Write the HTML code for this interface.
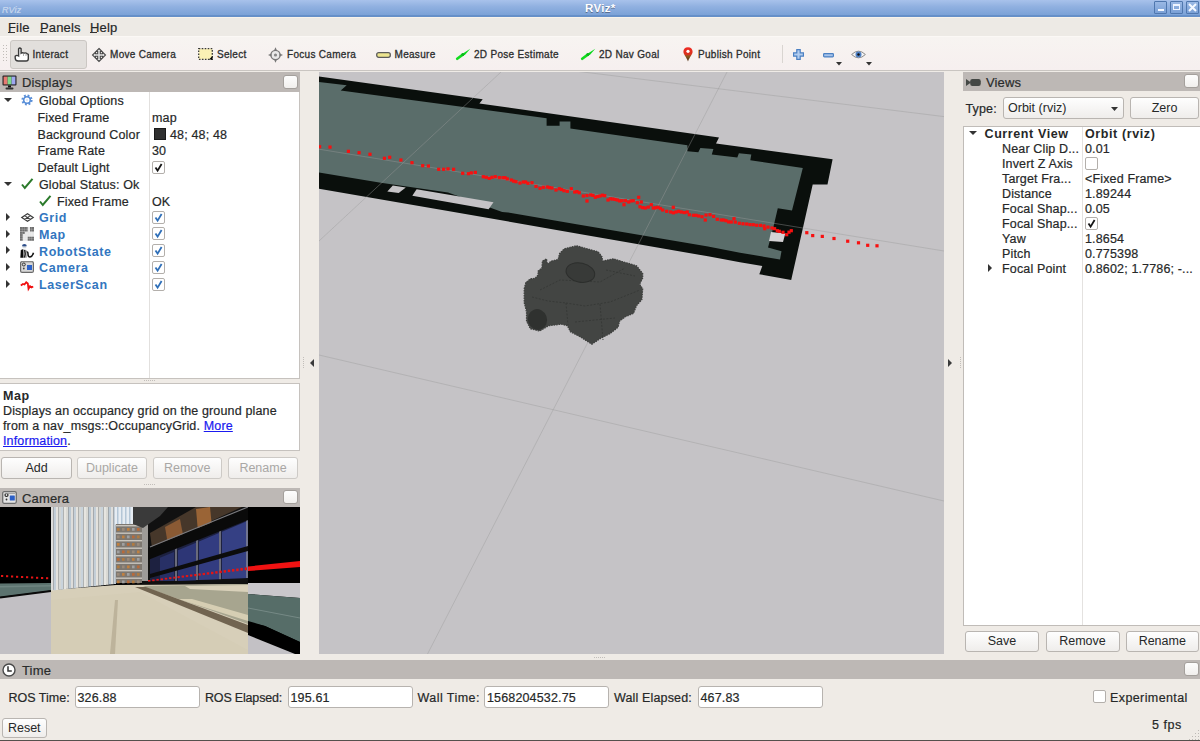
<!DOCTYPE html><html><head><meta charset="utf-8"><style>
*{box-sizing:border-box;margin:0;padding:0}
html,body{width:1200px;height:741px;overflow:hidden;background:#efebe6;font-family:"Liberation Sans",sans-serif;font-size:12.5px;color:#262828;-webkit-font-smoothing:antialiased}
.a{position:absolute}
.t{position:absolute;white-space:nowrap;line-height:16px;letter-spacing:0.15px;-webkit-text-stroke:0.2px currentColor}
svg{position:absolute;overflow:visible}
.hdr{position:absolute;background:#bdb8b5}
.hdr .t{top:3px;font-size:13px;color:#2a2c2c}
.chk{position:absolute;width:15px;height:14px;background:linear-gradient(#fdfdfd,#f1efed);border:1px solid #a4a09c;border-radius:3px}
.white{position:absolute;background:#fff;border:1px solid #b9b5b1}
.btn{position:absolute;border:1px solid #b9b5b1;border-radius:3px;background:linear-gradient(#fefefe,#efedeb);text-align:center;color:#262828}
.dis{color:#a9a7a5;border-color:#cdcac6}
.blue{color:#3276c0;font-weight:bold;letter-spacing:0.6px;-webkit-text-stroke:0}
.b{font-weight:bold;letter-spacing:0.6px;-webkit-text-stroke:0}
.tb{font-size:10px;color:#2c2e2e;letter-spacing:0.3px;-webkit-text-stroke:0.3px currentColor}
.vchk{position:absolute;width:13px;height:13px;border:1px solid #b3afab;border-radius:2px;background:#fff}
.field{position:absolute;height:22px;background:#fff;border:1px solid #b7b3af;border-radius:3px}
</style></head><body>
<div class="a" style="left:0;top:0;width:1200px;height:17px;background:linear-gradient(#a8c2eb,#90b0e0 45%,#7ba2d7);border-bottom:2px solid #6690c8"></div>
<div class="t b" style="left:585px;top:0px;color:#fff;font-size:11.5px;letter-spacing:0.3px;text-shadow:0 1px 0 #5a6f8f">RViz*</div>
<div class="t" style="left:2px;top:2px;color:#c8d8ee;font-size:9px;font-style:italic">RViz</div>
<div class="a" style="left:1154px;top:1px;width:13px;height:13px;border:1px solid #4f77ae;background:linear-gradient(#9ab8e4,#7aa0d6);border-radius:1px"></div>
<div class="a" style="left:1170px;top:1px;width:13px;height:13px;border:1px solid #4f77ae;background:linear-gradient(#9ab8e4,#7aa0d6);border-radius:1px"></div>
<div class="a" style="left:1186px;top:1px;width:13px;height:13px;border:1px solid #4f77ae;background:linear-gradient(#9ab8e4,#7aa0d6);border-radius:1px"></div>
<div class="a" style="left:1158px;top:9px;width:6px;height:2px;background:#f4f8ff"></div>
<div class="a" style="left:1173px;top:4px;width:7px;height:6px;border:1.5px solid #eef4ff;border-top-width:2.5px"></div>
<svg style="left:1188px;top:3px" width="9" height="9"><path d="M1 1L8 8M8 1L1 8" stroke="#f4f8ff" stroke-width="2"/></svg>
<div class="a" style="left:0;top:17px;width:1200px;height:19px;background:#edeae5;border-top:1px solid #f8f3ea"></div>
<div class="t" style="left:8px;top:20px;font-size:13px">File</div>
<div class="a" style="left:8px;top:32px;width:7px;height:1px;background:#333"></div>
<div class="t" style="left:40px;top:20px;font-size:13px">Panels</div>
<div class="a" style="left:40px;top:32px;width:7px;height:1px;background:#333"></div>
<div class="t" style="left:90px;top:20px;font-size:13px">Help</div>
<div class="a" style="left:90px;top:32px;width:7px;height:1px;background:#333"></div>
<div class="a" style="left:0;top:36px;width:1200px;height:35px;background:linear-gradient(#f7f4f1,#f6efef);border-top:1px solid #fbf8f5;border-bottom:1px solid #c9c5c1"></div>
<svg style="left:3px;top:45px" width="6" height="18"><rect x="0" y="0" width="1" height="1" fill="#c0bcb8"/><rect x="0" y="3" width="1" height="1" fill="#c0bcb8"/><rect x="0" y="6" width="1" height="1" fill="#c0bcb8"/><rect x="0" y="9" width="1" height="1" fill="#c0bcb8"/><rect x="0" y="12" width="1" height="1" fill="#c0bcb8"/><rect x="0" y="15" width="1" height="1" fill="#c0bcb8"/><rect x="3" y="0" width="1" height="1" fill="#c0bcb8"/><rect x="3" y="3" width="1" height="1" fill="#c0bcb8"/><rect x="3" y="6" width="1" height="1" fill="#c0bcb8"/><rect x="3" y="9" width="1" height="1" fill="#c0bcb8"/><rect x="3" y="12" width="1" height="1" fill="#c0bcb8"/><rect x="3" y="15" width="1" height="1" fill="#c0bcb8"/></svg>
<div class="a" style="left:10px;top:40px;width:77px;height:29px;border:1px solid #cbc7c3;border-radius:3px;background:#e2dfdc"></div><div class="t tb" style="left:32.5px;top:46.5px;">Interact</div>
<div class="t tb" style="left:110px;top:46.5px;">Move Camera</div>
<div class="t tb" style="left:217px;top:46.5px;">Select</div>
<div class="t tb" style="left:287px;top:46.5px;">Focus Camera</div>
<div class="t tb" style="left:394.5px;top:46.5px;">Measure</div>
<div class="t tb" style="left:474px;top:46.5px;">2D Pose Estimate</div>
<div class="t tb" style="left:599px;top:46.5px;">2D Nav Goal</div>
<div class="t tb" style="left:698px;top:46.5px;">Publish Point</div>
<svg style="left:14px;top:47px" width="16" height="15" viewBox="0 0 16 15"><path d="M4.6 9 L4.6 1.8 Q5.8 0.2 7.1 1.8 L7.1 6.2 Q8.6 5.2 10 6.2 Q11.6 5.4 13 6.6 L14.3 7.4 L14.3 11.8 Q14.3 14 12.1 14 L4.2 14 Q1.2 14 1.2 11 L1.2 9.3 Q2.6 7.6 4.6 9 Z" fill="#fff" stroke="#3b3b3b" stroke-width="1.4"/><path d="M9.5 6.5V9M12 6.8V9" stroke="#999" stroke-width="0.8"/></svg>
<svg style="left:92px;top:48px" width="14" height="14" viewBox="0 0 14 14"><polygon points="7,0.5 10,3.5 8.3,3.5 8.3,5.7 10.5,5.7 10.5,4 13.5,7 10.5,10 10.5,8.3 8.3,8.3 8.3,10.5 10,10.5 7,13.5 4,10.5 5.7,10.5 5.7,8.3 3.5,8.3 3.5,10 0.5,7 3.5,4 3.5,5.7 5.7,5.7 5.7,3.5 4,3.5" fill="#e6e6e6" stroke="#4a4a4a" stroke-width="1.1"/></svg>
<svg style="left:198px;top:48px" width="15" height="12" viewBox="0 0 15 12"><rect x="0.7" y="0.7" width="13.6" height="10.6" fill="#fbf1b5" stroke="#3a3a3a" stroke-width="1.3" stroke-dasharray="1.6 1.4"/><polygon points="14.5,8 14.5,11.5 11,11.5" fill="#000"/></svg>
<svg style="left:268px;top:47px" width="15" height="16" viewBox="0 0 15 16"><circle cx="7.5" cy="8" r="4.6" fill="#e9e9e9" stroke="#7a7a7a" stroke-width="1.4"/><polygon points="7.5,0.3 9,3.6 6,3.6" fill="#777"/><polygon points="7.5,15.7 9,12.4 6,12.4" fill="#777"/><polygon points="0,8 3.3,6.5 3.3,9.5" fill="#777"/><polygon points="15,8 11.7,6.5 11.7,9.5" fill="#777"/><circle cx="7.5" cy="8" r="1.6" fill="#888"/></svg>
<svg style="left:376px;top:51.5px" width="15" height="6" viewBox="0 0 15 6"><rect x="0.7" y="0.7" width="13.6" height="4.6" rx="2" fill="#ece48f" stroke="#5a5a5a" stroke-width="1.3"/></svg>
<svg style="left:456px;top:48px" width="15" height="12" viewBox="0 0 15 12"><path d="M1.2 10.8 L6.8 6.6" stroke="#12dc1f" stroke-width="2.6" stroke-linecap="round"/><path d="M5 7.6 L7.6 5 L14.3 0.7 L8.8 7 Z" fill="#08d81a"/><circle cx="6.8" cy="6.6" r="1.5" fill="#0bb71a"/></svg>
<svg style="left:580.5px;top:48px" width="15" height="12" viewBox="0 0 15 12"><path d="M1.2 10.8 L6.8 6.6" stroke="#12dc1f" stroke-width="2.6" stroke-linecap="round"/><path d="M5 7.6 L7.6 5 L14.3 0.7 L8.8 7 Z" fill="#08d81a"/><circle cx="6.8" cy="6.6" r="1.5" fill="#0bb71a"/></svg>
<svg style="left:682.5px;top:47px" width="10" height="15" viewBox="0 0 10 15"><defs><linearGradient id="pg" x1="0" y1="0" x2="0" y2="1"><stop offset="0" stop-color="#f02a22"/><stop offset="0.5" stop-color="#d8321e"/><stop offset="0.62" stop-color="#8a5a20"/><stop offset="1" stop-color="#4a2a10"/></linearGradient></defs><path d="M5 0.3 C8 0.3 9.6 2.4 9.6 4.8 C9.6 7.5 6.6 10 5 14.5 C3.4 10 0.4 7.5 0.4 4.8 C0.4 2.4 2 0.3 5 0.3Z" fill="url(#pg)"/><circle cx="5" cy="4.3" r="1.6" fill="#fff"/></svg>
<div class="a" style="left:782px;top:45px;width:1px;height:18px;background:#d9d5d1"></div>
<svg style="left:793px;top:49px" width="11" height="11" viewBox="0 0 11 11"><polygon points="3.8,0.6 7.2,0.6 7.2,3.8 10.4,3.8 10.4,7.2 7.2,7.2 7.2,10.4 3.8,10.4 3.8,7.2 0.6,7.2 0.6,3.8 3.8,3.8" fill="#b3cdef" stroke="#4b80c2" stroke-width="1.2"/></svg>
<svg style="left:823px;top:52.5px" width="11" height="4.5" viewBox="0 0 11 4.5"><rect x="0.6" y="0.6" width="9.8" height="3.3" rx="0.8" fill="#a6c3ea" stroke="#4b80c2" stroke-width="1.2"/></svg>
<svg style="left:836px;top:62px" width="6" height="3.5" viewBox="0 0 6 3.5"><polygon points="0,0 6,0 3,3.5" fill="#333"/></svg>
<svg style="left:866px;top:62px" width="6" height="3.5" viewBox="0 0 6 3.5"><polygon points="0,0 6,0 3,3.5" fill="#333"/></svg>
<svg style="left:851px;top:50px" width="15" height="9" viewBox="0 0 15 9"><path d="M0.6 4.5 Q7.5 -2.2 14.4 4.5 Q7.5 11.2 0.6 4.5Z" fill="#f4f4f4" stroke="#8a8a8a" stroke-width="1"/><circle cx="7.5" cy="4.5" r="3" fill="#4d7fc4"/><circle cx="7.5" cy="4.5" r="1.2" fill="#111"/></svg><div class="hdr" style="left:0;top:72px;width:300px;height:20px"><div class="t" style="left:22px">Displays</div></div>
<svg style="left:2px;top:75px" width="15" height="15" viewBox="0 0 15 15"><rect x="0.5" y="0.5" width="14" height="10" rx="1" fill="#222"/><rect x="1.6" y="1.6" width="4" height="7.8" fill="#e57a72"/><rect x="5.6" y="1.6" width="4" height="7.8" fill="#7fd98a"/><rect x="9.6" y="1.6" width="3.8" height="7.8" fill="#9fa8f0"/><rect x="6" y="10.5" width="3" height="2" fill="#111"/><rect x="3.5" y="12.5" width="8" height="2" rx="1" fill="#333"/></svg>
<div class="chk" style="left:283px;top:75px"></div>
<div class="white" style="left:0;top:92px;width:300px;height:287px;border-left:0;border-top:0;border-color:#c6c2be"></div>
<div class="a" style="left:149px;top:92px;width:1px;height:286px;background:#e2e0de"></div>
<div class="t" style="left:39px;top:93.3px;">Global Options</div>
<div class="a" style="left:4px;top:98.3px;width:0;height:0;border-left:4px solid transparent;border-right:4px solid transparent;border-top:4.5px solid #333"></div>
<svg style="left:21px;top:94.0px" width="12" height="12" viewBox="0 0 12 12"><circle cx="6" cy="6" r="4.3" fill="none" stroke="#5a8fd8" stroke-width="2.6" stroke-dasharray="1.7 1.68"/><circle cx="6" cy="6" r="3.3" fill="none" stroke="#5a8fd8" stroke-width="1.6"/><circle cx="6" cy="6" r="1.2" fill="#dfe9f7"/></svg>
<div class="t" style="left:37.5px;top:110.0px;">Fixed Frame</div>
<div class="t" style="left:152px;top:110.0px;">map</div>
<div class="t" style="left:37.5px;top:126.8px;">Background Color</div>
<div class="a" style="left:154px;top:127.8px;width:12px;height:12px;background:#303030;border:1px solid #1a1a1a"></div>
<div class="t" style="left:170px;top:126.8px;">48; 48; 48</div>
<div class="t" style="left:37.5px;top:143.4px;">Frame Rate</div>
<div class="t" style="left:152px;top:143.4px;">30</div>
<div class="t" style="left:37.5px;top:160.1px;">Default Light</div>
<div class="vchk" style="left:152px;top:160.6px"><svg style="left:0;top:0" width="11" height="11" viewBox="0 0 11 11"><path d="M2.5 5.5 L4.6 8.6 L8.6 2" fill="none" stroke="#151515" stroke-width="1.8"/></svg></div>
<div class="t" style="left:39px;top:176.8px;">Global Status: Ok</div>
<div class="a" style="left:4px;top:181.8px;width:0;height:0;border-left:4px solid transparent;border-right:4px solid transparent;border-top:4.5px solid #333"></div>
<svg style="left:21px;top:178.0px" width="12" height="11" viewBox="0 0 12 11"><path d="M1 6.5 L3.8 10 L11.5 0.8" fill="none" stroke="#2b7a2b" stroke-width="2"/></svg>
<div class="t" style="left:57px;top:193.5px;">Fixed Frame</div>
<div class="t" style="left:152px;top:193.5px;">OK</div>
<svg style="left:39px;top:194.7px" width="12" height="11" viewBox="0 0 12 11"><path d="M1 6.5 L3.8 10 L11.5 0.8" fill="none" stroke="#2b7a2b" stroke-width="2"/></svg>
<div class="t blue" style="left:39px;top:210.2px;">Grid</div>
<div class="vchk" style="left:152px;top:210.8px"><svg style="left:0;top:0" width="11" height="11" viewBox="0 0 11 11"><path d="M2.5 5.5 L4.6 8.6 L8.6 2" fill="none" stroke="#2f6fb8" stroke-width="1.8"/></svg></div>
<div class="a" style="left:6px;top:213.1px;width:0;height:0;border-top:4.2px solid transparent;border-bottom:4.2px solid transparent;border-left:4.5px solid #333"></div>
<svg style="left:21px;top:212.9px" width="13" height="9" viewBox="0 0 13 9"><path d="M0.7 4.5 L6.5 0.7 L12.3 4.5 L6.5 8.3Z M3.6 2.6 L9.4 6.4 M9.4 2.6 L3.6 6.4" fill="none" stroke="#3a3a3a" stroke-width="1.1"/></svg>
<div class="t blue" style="left:39px;top:226.9px;">Map</div>
<div class="vchk" style="left:152px;top:227.4px"><svg style="left:0;top:0" width="11" height="11" viewBox="0 0 11 11"><path d="M2.5 5.5 L4.6 8.6 L8.6 2" fill="none" stroke="#2f6fb8" stroke-width="1.8"/></svg></div>
<div class="a" style="left:6px;top:229.8px;width:0;height:0;border-top:4.2px solid transparent;border-bottom:4.2px solid transparent;border-left:4.5px solid #333"></div>
<svg style="left:19.8px;top:227.0px" width="14" height="14" viewBox="0 0 14 14"><rect x="0" y="0" width="14" height="13.7" fill="#e6e6e6"/><rect x="0" y="0" width="7.7" height="4.6" fill="#6e6e6e"/><rect x="0" y="4.6" width="4.9" height="2.4" fill="#6e6e6e"/><rect x="0" y="7" width="2.8" height="6.7" fill="#6e6e6e"/><rect x="10" y="0" width="4" height="4.6" fill="#6e6e6e"/><rect x="7.7" y="9.7" width="6.3" height="4" fill="#6e6e6e"/><path d="M2.3 0V13.7M4.6 0V13.7M7 0V13.7M9.3 0V13.7M11.6 0V13.7M0 2.3H14M0 4.6H14M0 6.9H14M0 9.2H14M0 11.5H14" stroke="#fff" stroke-opacity="0.35" stroke-width="0.5"/></svg>
<div class="t blue" style="left:39px;top:243.6px;">RobotState</div>
<div class="vchk" style="left:152px;top:244.1px"><svg style="left:0;top:0" width="11" height="11" viewBox="0 0 11 11"><path d="M2.5 5.5 L4.6 8.6 L8.6 2" fill="none" stroke="#2f6fb8" stroke-width="1.8"/></svg></div>
<div class="a" style="left:6px;top:246.4px;width:0;height:0;border-top:4.2px solid transparent;border-bottom:4.2px solid transparent;border-left:4.5px solid #333"></div>
<svg style="left:20px;top:244.0px" width="14" height="14" viewBox="0 0 14 14"><ellipse cx="4.4" cy="1.6" rx="2.3" ry="1.5" fill="#2e4f8a"/><rect x="2.6" y="2.4" width="3.6" height="1.8" fill="#d8dde0"/><path d="M0.3 13.8 L0.8 6.5 Q1.5 5.3 3.3 5.3 L3.6 13.8Z" fill="#0c0c0c"/><path d="M3.6 5.5 L6.5 6 L6.8 13.8 L3.6 13.8Z" fill="#9a9a9a"/><path d="M4.6 6 L5.3 10 L4.4 13.5" fill="none" stroke="#111" stroke-width="1"/><path d="M6.6 8 Q8 7.5 8 10 Q8 13 10 13 Q12.5 12.5 13.5 8.8" fill="none" stroke="#151515" stroke-width="1.5"/></svg>
<div class="t blue" style="left:39px;top:260.4px;">Camera</div>
<div class="vchk" style="left:152px;top:260.9px"><svg style="left:0;top:0" width="11" height="11" viewBox="0 0 11 11"><path d="M2.5 5.5 L4.6 8.6 L8.6 2" fill="none" stroke="#2f6fb8" stroke-width="1.8"/></svg></div>
<div class="a" style="left:6px;top:263.2px;width:0;height:0;border-top:4.2px solid transparent;border-bottom:4.2px solid transparent;border-left:4.5px solid #333"></div>
<svg style="left:20px;top:260.4px" width="14" height="13" viewBox="0 0 14 13"><rect x="0.6" y="1.6" width="12.8" height="10.8" rx="1.5" fill="#d8d8d8" stroke="#6a6a6a" stroke-width="1.2"/><circle cx="3.8" cy="4.5" r="1.5" fill="none" stroke="#333" stroke-width="1"/><circle cx="3.8" cy="8.5" r="0.9" fill="#444"/><rect x="7" y="5" width="5" height="5" fill="#2d62c8"/><rect x="2" y="1" width="10" height="1" fill="#888"/></svg>
<div class="t blue" style="left:39px;top:277.0px;">LaserScan</div>
<div class="vchk" style="left:152px;top:277.5px"><svg style="left:0;top:0" width="11" height="11" viewBox="0 0 11 11"><path d="M2.5 5.5 L4.6 8.6 L8.6 2" fill="none" stroke="#2f6fb8" stroke-width="1.8"/></svg></div>
<div class="a" style="left:6px;top:279.8px;width:0;height:0;border-top:4.2px solid transparent;border-bottom:4.2px solid transparent;border-left:4.5px solid #333"></div>
<svg style="left:20px;top:280.7px" width="14" height="9" viewBox="0 0 14 9"><path d="M0.8 4.5 L3 3 L4.5 3.5 L6.2 1.2 L7.8 2.5 L8.5 7.8 L10 5.2 L11.5 6.5 L13.2 5.5" fill="none" stroke="#f01010" stroke-width="1.8"/></svg>
<div class="a" style="left:144px;top:380px;width:1px;height:1px;background:#c2beba"></div><div class="a" style="left:146px;top:380px;width:1px;height:1px;background:#c2beba"></div><div class="a" style="left:148px;top:380px;width:1px;height:1px;background:#c2beba"></div><div class="a" style="left:150px;top:380px;width:1px;height:1px;background:#c2beba"></div><div class="a" style="left:152px;top:380px;width:1px;height:1px;background:#c2beba"></div><div class="a" style="left:154px;top:380px;width:1px;height:1px;background:#c2beba"></div>
<div class="a" style="left:144px;top:484px;width:1px;height:1px;background:#c2beba"></div><div class="a" style="left:146px;top:484px;width:1px;height:1px;background:#c2beba"></div><div class="a" style="left:148px;top:484px;width:1px;height:1px;background:#c2beba"></div><div class="a" style="left:150px;top:484px;width:1px;height:1px;background:#c2beba"></div><div class="a" style="left:152px;top:484px;width:1px;height:1px;background:#c2beba"></div><div class="a" style="left:154px;top:484px;width:1px;height:1px;background:#c2beba"></div>
<div class="white" style="left:0;top:383px;width:300px;height:68px;border-left:0;border-color:#c6c2be"></div>
<div class="t b" style="left:3px;top:387.7px;">Map</div>
<div class="t" style="left:3px;top:402.7px;">Displays an occupancy grid on the ground plane</div>
<div class="t" style="left:3px;top:417.7px;">from a nav_msgs::OccupancyGrid. <span style="color:#1a1af0;text-decoration:underline">More</span></div>
<div class="t" style="left:3px;top:432.7px;"><span style="color:#1a1af0;text-decoration:underline">Information</span>.</div>
<div class="btn" style="left:1px;top:457px;width:71px;height:22px;line-height:20px">Add</div>
<div class="btn dis" style="left:77px;top:457px;width:70px;height:22px;line-height:20px">Duplicate</div>
<div class="btn dis" style="left:152.5px;top:457px;width:69.5px;height:22px;line-height:20px">Remove</div>
<div class="btn dis" style="left:228px;top:457px;width:70px;height:22px;line-height:20px">Rename</div>
<div class="hdr" style="left:0;top:488px;width:300px;height:19px"><div class="t" style="left:22px">Camera</div></div>
<svg style="left:2px;top:491px" width="15" height="13" viewBox="0 0 15 13"><rect x="0.7" y="0.7" width="13.6" height="11.6" rx="1.5" fill="#e4e4e4" stroke="#6e6e6e" stroke-width="1.3"/><circle cx="4.5" cy="4" r="1.5" fill="none" stroke="#222" stroke-width="1.2"/><circle cx="4.5" cy="8.5" r="0.9" fill="#333"/><rect x="7.8" y="4.5" width="5" height="5" rx="0.5" fill="#2c5fc6"/><rect x="3" y="1.8" width="10" height="1" fill="#999"/></svg>
<div class="chk" style="left:283px;top:490px"></div><div class="a" style="left:310px;top:359px;width:0;height:0;border-top:4px solid transparent;border-bottom:4px solid transparent;border-right:4px solid #3a3a3a"></div>
<div class="a" style="left:948px;top:359px;width:0;height:0;border-top:4px solid transparent;border-bottom:4px solid transparent;border-left:4px solid #3a3a3a"></div>
<div class="a" style="left:303px;top:357px;width:1px;height:1px;background:#c2beba"></div><div class="a" style="left:303px;top:359px;width:1px;height:1px;background:#c2beba"></div><div class="a" style="left:303px;top:361px;width:1px;height:1px;background:#c2beba"></div><div class="a" style="left:303px;top:363px;width:1px;height:1px;background:#c2beba"></div><div class="a" style="left:303px;top:365px;width:1px;height:1px;background:#c2beba"></div><div class="a" style="left:303px;top:367px;width:1px;height:1px;background:#c2beba"></div>
<div class="a" style="left:960px;top:357px;width:1px;height:1px;background:#c2beba"></div><div class="a" style="left:960px;top:359px;width:1px;height:1px;background:#c2beba"></div><div class="a" style="left:960px;top:361px;width:1px;height:1px;background:#c2beba"></div><div class="a" style="left:960px;top:363px;width:1px;height:1px;background:#c2beba"></div><div class="a" style="left:960px;top:365px;width:1px;height:1px;background:#c2beba"></div><div class="a" style="left:960px;top:367px;width:1px;height:1px;background:#c2beba"></div>
<div class="hdr" style="left:963px;top:72px;width:237px;height:19px"><div class="t" style="left:23px">Views</div></div>
<svg style="left:966px;top:79px" width="15" height="7" viewBox="0 0 15 7"><polygon points="0,0 5,3.5 0,7" fill="#444845"/><rect x="4.2" y="0" width="10.6" height="7" rx="2.2" fill="#444845"/></svg>
<div class="chk" style="left:1184px;top:74px"></div>
<div class="t" style="left:965.5px;top:101px;">Type:</div>
<div class="btn" style="left:1003px;top:97px;width:121px;height:22px;text-align:left;padding-left:4px;line-height:20px">Orbit (rviz)</div>
<svg style="left:1111px;top:106.5px" width="7" height="4" viewBox="0 0 7 4"><polygon points="0,0 7,0 3.5,4" fill="#333"/></svg>
<div class="btn" style="left:1130px;top:97px;width:69px;height:22px;line-height:20px">Zero</div>
<div class="white" style="left:963px;top:126px;width:237px;height:500px;border-right:0;border-color:#c0bcb8"></div>
<div class="a" style="left:1082px;top:127px;width:1px;height:498px;background:#e4e2e0"></div>
<div class="t b" style="left:984.5px;top:126.3px;">Current View</div>
<div class="t b" style="left:1085px;top:126.3px;">Orbit (rviz)</div>
<div class="a" style="left:969px;top:131.3px;width:0;height:0;border-left:4px solid transparent;border-right:4px solid transparent;border-top:4.5px solid #333"></div>
<div class="t" style="left:1002px;top:141.2px;">Near Clip D...</div>
<div class="t" style="left:1085px;top:141.2px;">0.01</div>
<div class="t" style="left:1002px;top:156.2px;">Invert Z Axis</div>
<div class="vchk" style="left:1084.5px;top:156.7px"></div>
<div class="t" style="left:1002px;top:171.2px;">Target Fra...</div>
<div class="t" style="left:1085px;top:171.2px;">&lt;Fixed Frame&gt;</div>
<div class="t" style="left:1002px;top:186.1px;">Distance</div>
<div class="t" style="left:1085px;top:186.1px;">1.89244</div>
<div class="t" style="left:1002px;top:201.1px;">Focal Shap...</div>
<div class="t" style="left:1085px;top:201.1px;">0.05</div>
<div class="t" style="left:1002px;top:216.0px;">Focal Shap...</div>
<div class="vchk" style="left:1084.5px;top:216.5px"><svg style="left:0;top:0" width="11" height="11" viewBox="0 0 11 11"><path d="M2.5 5.5 L4.6 8.6 L8.6 2" fill="none" stroke="#151515" stroke-width="1.8"/></svg></div>
<div class="t" style="left:1002px;top:230.9px;">Yaw</div>
<div class="t" style="left:1085px;top:230.9px;">1.8654</div>
<div class="t" style="left:1002px;top:245.9px;">Pitch</div>
<div class="t" style="left:1085px;top:245.9px;">0.775398</div>
<div class="t" style="left:1002px;top:260.9px;">Focal Point</div>
<div class="t" style="left:1085px;top:260.9px;">0.8602; 1.7786; -...</div>
<div class="a" style="left:988px;top:263.9px;width:0;height:0;border-top:4px solid transparent;border-bottom:4px solid transparent;border-left:4px solid #333"></div>
<div class="btn" style="left:965px;top:631px;width:74px;height:21px;line-height:19px">Save</div>
<div class="btn" style="left:1045.5px;top:631px;width:74px;height:21px;line-height:19px">Remove</div>
<div class="btn" style="left:1125.5px;top:631px;width:73.5px;height:21px;line-height:19px">Rename</div>
<div class="a" style="left:594px;top:657px;width:1px;height:1px;background:#c2beba"></div><div class="a" style="left:596px;top:657px;width:1px;height:1px;background:#c2beba"></div><div class="a" style="left:598px;top:657px;width:1px;height:1px;background:#c2beba"></div><div class="a" style="left:600px;top:657px;width:1px;height:1px;background:#c2beba"></div><div class="a" style="left:602px;top:657px;width:1px;height:1px;background:#c2beba"></div><div class="a" style="left:604px;top:657px;width:1px;height:1px;background:#c2beba"></div>
<div class="hdr" style="left:0;top:660px;width:1200px;height:19px"><div class="t" style="left:22px">Time</div></div>
<svg style="left:2px;top:663px" width="14" height="14" viewBox="0 0 14 14"><circle cx="7" cy="7" r="6" fill="#fff" stroke="#4a4a4a" stroke-width="1.4"/><path d="M6 3.3 V8 H9.8" fill="none" stroke="#333" stroke-width="1.5"/></svg>
<div class="chk" style="left:1184px;top:662px"></div>
<div class="t" style="left:8.5px;top:689.5px;letter-spacing:0px">ROS Time:</div>
<div class="field" style="left:74.5px;top:685.5px;width:125px"></div>
<div class="t" style="left:77.5px;top:689.5px;">326.88</div>
<div class="t" style="left:205px;top:689.5px;letter-spacing:-0.18px">ROS Elapsed:</div>
<div class="field" style="left:287.5px;top:685.5px;width:125px"></div>
<div class="t" style="left:290.5px;top:689.5px;">195.61</div>
<div class="t" style="left:417.5px;top:689.5px;letter-spacing:0.45px">Wall Time:</div>
<div class="field" style="left:484px;top:685.5px;width:125px"></div>
<div class="t" style="left:487px;top:689.5px;">1568204532.75</div>
<div class="t" style="left:614px;top:689.5px;letter-spacing:0.15px">Wall Elapsed:</div>
<div class="field" style="left:697.5px;top:685.5px;width:125px"></div>
<div class="t" style="left:700.5px;top:689.5px;">467.83</div>
<div class="vchk" style="left:1093px;top:690px;width:13px;height:13px"></div>
<div class="t" style="left:1110px;top:689.5px;letter-spacing:0.4px">Experimental</div>
<div class="t" style="left:1152px;top:717px;letter-spacing:0.55px">5 fps</div>
<div class="btn" style="left:1.5px;top:717.5px;width:45.5px;height:20.5px;line-height:19px">Reset</div>
<div class="a" style="left:0;top:740px;width:1200px;height:1px;background:#55504c"></div>
<svg style="left:1188px;top:729px" width="11" height="11"><rect x="1" y="10" width="1" height="1" fill="#bdb9b5"/><rect x="4" y="7" width="1" height="1" fill="#bdb9b5"/><rect x="4" y="10" width="1" height="1" fill="#bdb9b5"/><rect x="7" y="4" width="1" height="1" fill="#bdb9b5"/><rect x="7" y="7" width="1" height="1" fill="#bdb9b5"/><rect x="7" y="10" width="1" height="1" fill="#bdb9b5"/><rect x="10" y="1" width="1" height="1" fill="#bdb9b5"/><rect x="10" y="4" width="1" height="1" fill="#bdb9b5"/><rect x="10" y="7" width="1" height="1" fill="#bdb9b5"/><rect x="10" y="10" width="1" height="1" fill="#bdb9b5"/></svg><svg style="left:319px;top:72px;overflow:hidden" width="625" height="582" viewBox="319 72 625 582"><rect x="319" y="72" width="625" height="582" fill="#c5c3c6"/><line x1="319" y1="355" x2="944" y2="501" stroke="#9a9a9a" stroke-opacity="0.42" stroke-width="1"/><line x1="575" y1="71" x2="944" y2="116.6" stroke="#9a9a9a" stroke-opacity="0.42" stroke-width="1"/><polygon points="319,76.5 482.7,99.2 479.4,103.5 719,137.6 716,143.5 832.6,159.3 827.5,184.5 812.7,184.5 791.2,280.1 759.3,274.2 762.3,266 740,262.3 708,256.3 578,233.8 448,210.9 319,188.7" fill="#0a0f0c"/><polygon points="319,82 346.7,85.2 340.7,90.6 546.6,118.2 546.6,125.8 559.6,125.8 559.6,121.4 570.4,121.4 570.4,128.5 687.4,145.2 687.4,151.2 698.3,152.3 700.4,147.9 713.4,149 711.8,154.4 737.3,157.6 738.9,153.3 751.3,154.4 750.3,160.3 802.8,167.9 792,210.4 777.8,208.2 772,233 768,247.5 781.5,251.2 780,259.4 740,252.7 708,246.6 578,224.5 508.1,212.5 502.2,212 448,192.5 380.8,182.8 319,172.5" fill="#5a6d6a"/><polygon points="392.8,185.5 405.8,187.6 398.7,193 387.3,191.4" fill="#c5c3c6"/><polygon points="416.6,189.3 493.5,202.2 488.6,209.3 412.3,195.8" fill="#c5c3c6"/><polygon points="771,232 785.3,233.5 783,242 769,241" fill="#d4d2d4"/><line x1="501" y1="72" x2="319" y2="241" stroke="#9a9a9a" stroke-opacity="0.42" stroke-width="1"/><line x1="727" y1="72" x2="427.5" y2="654" stroke="#9a9a9a" stroke-opacity="0.42" stroke-width="1"/><line x1="319" y1="149.2" x2="944" y2="251" stroke="#9a9a9a" stroke-opacity="0.42" stroke-width="1"/><rect x="318.0" y="145.1" width="3.2" height="3.2" fill="#f81010"/><rect x="328.4" y="145.5" width="3.2" height="3.2" fill="#f81010"/><rect x="346.8" y="149.7" width="3.2" height="3.2" fill="#f81010"/><rect x="357.5" y="151.1" width="3.2" height="3.2" fill="#f81010"/><rect x="368.4" y="152.7" width="3.2" height="3.2" fill="#f81010"/><rect x="382.8" y="156.7" width="3.2" height="3.2" fill="#f81010"/><rect x="388.1" y="155.7" width="3.2" height="3.2" fill="#f81010"/><rect x="399.3" y="158.4" width="3.2" height="3.2" fill="#f81010"/><rect x="410.4" y="161.1" width="3.2" height="3.2" fill="#f81010"/><rect x="421.1" y="164.1" width="3.2" height="3.2" fill="#f81010"/><rect x="426.8" y="164.4" width="3.2" height="3.2" fill="#f81010"/><rect x="437.1" y="167.7" width="3.2" height="3.2" fill="#f81010"/><rect x="442.0" y="167.7" width="3.2" height="3.2" fill="#f81010"/><rect x="446.4" y="167.3" width="3.2" height="3.2" fill="#f81010"/><rect x="452.0" y="167.7" width="3.2" height="3.2" fill="#f81010"/><rect x="461.1" y="171.7" width="3.2" height="3.2" fill="#f81010"/><rect x="466.8" y="172.1" width="3.2" height="3.2" fill="#f81010"/><rect x="469.7" y="171.3" width="3.2" height="3.2" fill="#f81010"/><rect x="473.7" y="170.8" width="3.2" height="3.2" fill="#f81010"/><rect x="585.4" y="199.4" width="3.2" height="3.2" fill="#f81010"/><rect x="622.4" y="203.1" width="3.2" height="3.2" fill="#f81010"/><rect x="637.1" y="195.7" width="3.2" height="3.2" fill="#f81010"/><rect x="671.7" y="205.7" width="3.2" height="3.2" fill="#f81010"/><rect x="703.7" y="218.4" width="3.2" height="3.2" fill="#f81010"/><rect x="732.4" y="217.1" width="3.2" height="3.2" fill="#f81010"/><rect x="763.1" y="227.1" width="3.2" height="3.2" fill="#f81010"/><rect x="805.2" y="231.1" width="3.2" height="3.2" fill="#f81010"/><rect x="811.1" y="234.0" width="3.2" height="3.2" fill="#f81010"/><rect x="820.7" y="234.8" width="3.2" height="3.2" fill="#f81010"/><rect x="832.4" y="236.9" width="3.2" height="3.2" fill="#f81010"/><rect x="846.1" y="239.6" width="3.2" height="3.2" fill="#f81010"/><rect x="856.9" y="241.2" width="3.2" height="3.2" fill="#f81010"/><rect x="866.1" y="243.7" width="3.2" height="3.2" fill="#f81010"/><rect x="875.4" y="244.2" width="3.2" height="3.2" fill="#f81010"/><rect x="481.7" y="175.1" width="3.2" height="3.2" fill="#f81010"/><rect x="484.7" y="175.7" width="3.2" height="3.2" fill="#f81010"/><rect x="487.7" y="176.8" width="3.2" height="3.2" fill="#f81010"/><rect x="490.4" y="175.7" width="3.2" height="3.2" fill="#f81010"/><rect x="493.7" y="175.1" width="3.2" height="3.2" fill="#f81010"/><rect x="497.7" y="176.0" width="3.2" height="3.2" fill="#f81010"/><rect x="501.4" y="176.1" width="3.2" height="3.2" fill="#f81010"/><rect x="503.5" y="176.1" width="3.2" height="3.2" fill="#f81010"/><rect x="505.7" y="177.3" width="3.2" height="3.2" fill="#f81010"/><rect x="509.7" y="178.4" width="3.2" height="3.2" fill="#f81010"/><rect x="512.0" y="179.5" width="3.2" height="3.2" fill="#f81010"/><rect x="514.4" y="180.1" width="3.2" height="3.2" fill="#f81010"/><rect x="518.4" y="181.4" width="3.2" height="3.2" fill="#f81010"/><rect x="521.7" y="180.4" width="3.2" height="3.2" fill="#f81010"/><rect x="524.0" y="180.4" width="3.2" height="3.2" fill="#f81010"/><rect x="526.4" y="181.7" width="3.2" height="3.2" fill="#f81010"/><rect x="530.4" y="181.1" width="3.2" height="3.2" fill="#f81010"/><rect x="534.4" y="184.8" width="3.2" height="3.2" fill="#f81010"/><rect x="538.4" y="186.7" width="3.2" height="3.2" fill="#f81010"/><rect x="541.7" y="185.7" width="3.2" height="3.2" fill="#f81010"/><rect x="545.7" y="185.4" width="3.2" height="3.2" fill="#f81010"/><rect x="548.0" y="186.0" width="3.2" height="3.2" fill="#f81010"/><rect x="550.4" y="186.4" width="3.2" height="3.2" fill="#f81010"/><rect x="554.4" y="188.4" width="3.2" height="3.2" fill="#f81010"/><rect x="557.7" y="187.1" width="3.2" height="3.2" fill="#f81010"/><rect x="560.0" y="187.9" width="3.2" height="3.2" fill="#f81010"/><rect x="562.4" y="189.1" width="3.2" height="3.2" fill="#f81010"/><rect x="565.7" y="189.7" width="3.2" height="3.2" fill="#f81010"/><rect x="569.7" y="187.1" width="3.2" height="3.2" fill="#f81010"/><rect x="573.1" y="190.4" width="3.2" height="3.2" fill="#f81010"/><rect x="575.4" y="190.0" width="3.2" height="3.2" fill="#f81010"/><rect x="577.7" y="191.1" width="3.2" height="3.2" fill="#f81010"/><rect x="581.7" y="194.4" width="3.2" height="3.2" fill="#f81010"/><rect x="585.4" y="193.9" width="3.2" height="3.2" fill="#f81010"/><rect x="589.1" y="193.3" width="3.2" height="3.2" fill="#f81010"/><rect x="591.4" y="193.8" width="3.2" height="3.2" fill="#f81010"/><rect x="593.7" y="195.7" width="3.2" height="3.2" fill="#f81010"/><rect x="596.0" y="194.9" width="3.2" height="3.2" fill="#f81010"/><rect x="598.4" y="194.4" width="3.2" height="3.2" fill="#f81010"/><rect x="600.8" y="193.6" width="3.2" height="3.2" fill="#f81010"/><rect x="603.1" y="194.1" width="3.2" height="3.2" fill="#f81010"/><rect x="606.4" y="198.4" width="3.2" height="3.2" fill="#f81010"/><rect x="608.8" y="197.2" width="3.2" height="3.2" fill="#f81010"/><rect x="611.1" y="197.4" width="3.2" height="3.2" fill="#f81010"/><rect x="613.4" y="197.8" width="3.2" height="3.2" fill="#f81010"/><rect x="615.7" y="198.4" width="3.2" height="3.2" fill="#f81010"/><rect x="618.0" y="199.3" width="3.2" height="3.2" fill="#f81010"/><rect x="620.4" y="199.1" width="3.2" height="3.2" fill="#f81010"/><rect x="623.8" y="199.1" width="3.2" height="3.2" fill="#f81010"/><rect x="627.1" y="200.4" width="3.2" height="3.2" fill="#f81010"/><rect x="629.4" y="199.3" width="3.2" height="3.2" fill="#f81010"/><rect x="631.7" y="199.1" width="3.2" height="3.2" fill="#f81010"/><rect x="635.7" y="201.1" width="3.2" height="3.2" fill="#f81010"/><rect x="639.7" y="200.4" width="3.2" height="3.2" fill="#f81010"/><rect x="638.4" y="205.1" width="3.2" height="3.2" fill="#f81010"/><rect x="641.0" y="206.0" width="3.2" height="3.2" fill="#f81010"/><rect x="643.7" y="206.4" width="3.2" height="3.2" fill="#f81010"/><rect x="646.7" y="205.5" width="3.2" height="3.2" fill="#f81010"/><rect x="649.7" y="203.1" width="3.2" height="3.2" fill="#f81010"/><rect x="651.7" y="206.4" width="3.2" height="3.2" fill="#f81010"/><rect x="654.0" y="206.2" width="3.2" height="3.2" fill="#f81010"/><rect x="656.4" y="205.7" width="3.2" height="3.2" fill="#f81010"/><rect x="658.8" y="206.9" width="3.2" height="3.2" fill="#f81010"/><rect x="661.1" y="208.4" width="3.2" height="3.2" fill="#f81010"/><rect x="665.1" y="209.7" width="3.2" height="3.2" fill="#f81010"/><rect x="669.1" y="210.4" width="3.2" height="3.2" fill="#f81010"/><rect x="671.8" y="211.2" width="3.2" height="3.2" fill="#f81010"/><rect x="674.4" y="210.4" width="3.2" height="3.2" fill="#f81010"/><rect x="677.0" y="209.7" width="3.2" height="3.2" fill="#f81010"/><rect x="679.7" y="210.4" width="3.2" height="3.2" fill="#f81010"/><rect x="682.7" y="211.0" width="3.2" height="3.2" fill="#f81010"/><rect x="685.7" y="210.4" width="3.2" height="3.2" fill="#f81010"/><rect x="687.7" y="213.1" width="3.2" height="3.2" fill="#f81010"/><rect x="691.7" y="213.7" width="3.2" height="3.2" fill="#f81010"/><rect x="694.4" y="213.7" width="3.2" height="3.2" fill="#f81010"/><rect x="697.1" y="214.4" width="3.2" height="3.2" fill="#f81010"/><rect x="700.4" y="215.1" width="3.2" height="3.2" fill="#f81010"/><rect x="704.4" y="213.5" width="3.2" height="3.2" fill="#f81010"/><rect x="708.4" y="213.1" width="3.2" height="3.2" fill="#f81010"/><rect x="712.0" y="214.8" width="3.2" height="3.2" fill="#f81010"/><rect x="715.7" y="217.7" width="3.2" height="3.2" fill="#f81010"/><rect x="719.7" y="218.4" width="3.2" height="3.2" fill="#f81010"/><rect x="722.0" y="218.4" width="3.2" height="3.2" fill="#f81010"/><rect x="724.4" y="219.1" width="3.2" height="3.2" fill="#f81010"/><rect x="727.0" y="220.3" width="3.2" height="3.2" fill="#f81010"/><rect x="729.7" y="220.4" width="3.2" height="3.2" fill="#f81010"/><rect x="733.7" y="220.5" width="3.2" height="3.2" fill="#f81010"/><rect x="737.7" y="221.7" width="3.2" height="3.2" fill="#f81010"/><rect x="741.4" y="222.2" width="3.2" height="3.2" fill="#f81010"/><rect x="745.1" y="222.4" width="3.2" height="3.2" fill="#f81010"/><rect x="748.4" y="223.0" width="3.2" height="3.2" fill="#f81010"/><rect x="751.7" y="223.1" width="3.2" height="3.2" fill="#f81010"/><rect x="755.1" y="223.7" width="3.2" height="3.2" fill="#f81010"/><rect x="758.8" y="223.8" width="3.2" height="3.2" fill="#f81010"/><rect x="762.4" y="224.4" width="3.2" height="3.2" fill="#f81010"/><rect x="766.4" y="225.5" width="3.2" height="3.2" fill="#f81010"/><rect x="770.4" y="226.4" width="3.2" height="3.2" fill="#f81010"/><rect x="773.0" y="227.1" width="3.2" height="3.2" fill="#f81010"/><rect x="775.7" y="229.1" width="3.2" height="3.2" fill="#f81010"/><rect x="777.7" y="229.7" width="3.2" height="3.2" fill="#f81010"/><rect x="781.4" y="230.7" width="3.2" height="3.2" fill="#f81010"/><rect x="785.1" y="233.1" width="3.2" height="3.2" fill="#f81010"/><rect x="787.4" y="230.6" width="3.2" height="3.2" fill="#f81010"/><rect x="789.7" y="229.1" width="3.2" height="3.2" fill="#f81010"/><polygon points="524.2,288.8 525.8,282.6 530.4,278.8 535.0,278.3 538.1,274.9 538.1,271.1 541.9,268.0 542.4,261.1 546.5,258.8 547.3,264.2 551.2,261.1 558.1,259.5 559.6,253.4 564.2,248.8 576.5,245.7 587.3,248.8 598.1,251.8 601.9,256.5 602.7,261.1 613.5,258.8 625.8,262.6 636.5,265.7 642.7,273.4 642.7,278.0 639.6,284.2 642.7,288.8 641.9,299.5 636.5,305.7 633.5,313.4 625.8,316.5 619.6,321.1 618.1,327.2 610.4,333.4 601.2,338.0 591.9,344.2 579.6,336.5 570.4,331.8 567.3,325.7 561.2,324.2 548.8,325.7 539.6,331.1 530.4,328.8 526.5,321.1 526.5,311.8 524.2,302.6" fill="#434543" stroke="#3d3f3d" stroke-width="1.2" stroke-dasharray="1.5 1"/><path d="M532 297 L548 301 L566 303 M566 303 L585 306 L610 302 L640 290 M566 303 L568 325 M600 304 L603 340 M540 290 L560 280 L600 282 L625 268 M575 322 L615 318 M606 270 L635 276" fill="none" stroke="#363836" stroke-width="0.9" stroke-dasharray="2 1.5"/><ellipse cx="580.4" cy="272.6" rx="14.5" ry="9.5" fill="#383a38" stroke="#2c2e2c" stroke-width="1" transform="rotate(12 580.4 272.6)"/><ellipse cx="537.5" cy="319.5" rx="9.5" ry="10.5" fill="#2f312f" transform="rotate(-20 537.5 319.5)"/></svg><svg style="left:0;top:507px;overflow:hidden" width="300" height="147" viewBox="0 507 300 147"><rect x="0" y="507" width="300" height="147" fill="#000"/><polygon points="0,583.5 51,583 51,590.5 0,597" fill="#5c736f" /><polygon points="0,586 51,585 51,586.5 0,587.5" fill="#6f8581" /><polygon points="0,597.5 51,591 51,654 0,654" fill="#c2c0c4" /><line x1="0" y1="597.5" x2="51" y2="591" stroke="#0a0a0a" stroke-width="1.8"/><rect x="1" y="575.0" width="2.2" height="2" fill="#e41414"/><rect x="6" y="575.2" width="2.2" height="2" fill="#e41414"/><rect x="11" y="575.5" width="2.2" height="2" fill="#e41414"/><rect x="16" y="575.8" width="2.2" height="2" fill="#e41414"/><rect x="21" y="576.0" width="2.2" height="2" fill="#e41414"/><rect x="26" y="576.2" width="2.2" height="2" fill="#e41414"/><rect x="31" y="576.5" width="2.2" height="2" fill="#e41414"/><rect x="36" y="576.8" width="2.2" height="2" fill="#e41414"/><rect x="41" y="577.0" width="2.2" height="2" fill="#e41414"/><rect x="46" y="577.2" width="2.2" height="2" fill="#e41414"/><polygon points="51,590 116,585 248,584 248,654 51,654" fill="#d7cfb9" /><polygon points="51,600 140,592 248,650 248,654 51,654" fill="#d5cdb6" /><polygon points="143,586 248,584 248,624 210,610 150,589" fill="#a7a58f" /><polygon points="185,586 248,585 248,592 190,589" fill="#d9d1ba" /><polygon points="178,599 192,599 248,615 248,621" fill="#d6ceb3" /><polygon points="135,587 146,587 248,625 248,633" fill="#716450" /><polygon points="115,600 118,600 115,654 110,654" fill="#bdb39b"/><rect x="51.0" y="507" width="2.6" height="83.5" fill="#dedddA"/><rect x="53.5" y="507" width="2.6" height="83.2" fill="#c3ced7"/><rect x="56.0" y="507" width="2.6" height="83.0" fill="#e4e2dd"/><rect x="58.5" y="507" width="2.6" height="82.7" fill="#d2d5d3"/><rect x="61.0" y="507" width="2.6" height="82.5" fill="#c9d3db"/><rect x="63.5" y="507" width="2.6" height="82.2" fill="#e6e5e0"/><rect x="66.0" y="507" width="2.6" height="81.9" fill="#d9d9d4"/><rect x="68.5" y="507" width="2.6" height="81.7" fill="#bac8d3"/><rect x="71.0" y="507" width="2.6" height="81.4" fill="#dedddA"/><rect x="73.5" y="507" width="2.6" height="81.2" fill="#c3ced7"/><rect x="76.0" y="507" width="2.6" height="80.9" fill="#e4e2dd"/><rect x="78.5" y="507" width="2.6" height="80.6" fill="#d2d5d3"/><rect x="81.0" y="507" width="2.6" height="80.4" fill="#c9d3db"/><rect x="83.5" y="507" width="2.6" height="80.1" fill="#e6e5e0"/><rect x="86.0" y="507" width="2.6" height="79.9" fill="#d9d9d4"/><rect x="88.5" y="507" width="2.6" height="79.6" fill="#bac8d3"/><rect x="91.0" y="507" width="2.6" height="79.3" fill="#dedddA"/><rect x="93.5" y="507" width="2.6" height="79.1" fill="#c3ced7"/><rect x="96.0" y="507" width="2.6" height="78.8" fill="#e4e2dd"/><rect x="98.5" y="507" width="2.6" height="78.6" fill="#d2d5d3"/><rect x="101.0" y="507" width="2.6" height="78.3" fill="#c9d3db"/><rect x="103.5" y="507" width="2.6" height="78.0" fill="#e6e5e0"/><rect x="106.0" y="507" width="2.6" height="77.8" fill="#d9d9d4"/><rect x="108.5" y="507" width="2.6" height="77.5" fill="#bac8d3"/><rect x="111.0" y="507" width="2.6" height="77.3" fill="#dedddA"/><rect x="113.5" y="507" width="2.6" height="77.0" fill="#c3ced7"/><rect x="115" y="507" width="21" height="18" fill="#e6ecf2"/><rect x="117" y="507" width="1.5" height="18" fill="#b4c6d6"/><rect x="121" y="507" width="1.5" height="18" fill="#b4c6d6"/><rect x="125" y="507" width="1.5" height="18" fill="#b4c6d6"/><rect x="129" y="507" width="1.5" height="18" fill="#b4c6d6"/><rect x="133" y="507" width="1.5" height="18" fill="#b4c6d6"/><rect x="115.8" y="524" width="26.5" height="59" fill="#7d7770"/><rect x="115.8" y="525.0" width="26.5" height="1.4" fill="#c9c5be"/><rect x="117" y="528.0" width="2.6" height="2.8" fill="#b07a40"/><rect x="122" y="528.0" width="2.6" height="2.8" fill="#9a8a7a"/><rect x="127" y="528.0" width="2.6" height="2.8" fill="#c08040"/><rect x="132" y="528.0" width="2.6" height="2.8" fill="#a0a0a0"/><rect x="137" y="528.0" width="2.6" height="2.8" fill="#b86a3a"/><rect x="115.8" y="532.5" width="26.5" height="1.4" fill="#c9c5be"/><rect x="117" y="535.5" width="2.6" height="2.8" fill="#9a8a7a"/><rect x="122" y="535.5" width="2.6" height="2.8" fill="#c08040"/><rect x="127" y="535.5" width="2.6" height="2.8" fill="#a0a0a0"/><rect x="132" y="535.5" width="2.6" height="2.8" fill="#b86a3a"/><rect x="137" y="535.5" width="2.6" height="2.8" fill="#b07a40"/><rect x="115.8" y="540.0" width="26.5" height="1.4" fill="#c9c5be"/><rect x="117" y="543.0" width="2.6" height="2.8" fill="#c08040"/><rect x="122" y="543.0" width="2.6" height="2.8" fill="#a0a0a0"/><rect x="127" y="543.0" width="2.6" height="2.8" fill="#b86a3a"/><rect x="132" y="543.0" width="2.6" height="2.8" fill="#b07a40"/><rect x="137" y="543.0" width="2.6" height="2.8" fill="#9a8a7a"/><rect x="115.8" y="547.5" width="26.5" height="1.4" fill="#c9c5be"/><rect x="117" y="550.5" width="2.6" height="2.8" fill="#a0a0a0"/><rect x="122" y="550.5" width="2.6" height="2.8" fill="#b86a3a"/><rect x="127" y="550.5" width="2.6" height="2.8" fill="#b07a40"/><rect x="132" y="550.5" width="2.6" height="2.8" fill="#9a8a7a"/><rect x="137" y="550.5" width="2.6" height="2.8" fill="#c08040"/><rect x="115.8" y="555.0" width="26.5" height="1.4" fill="#c9c5be"/><rect x="117" y="558.0" width="2.6" height="2.8" fill="#b86a3a"/><rect x="122" y="558.0" width="2.6" height="2.8" fill="#b07a40"/><rect x="127" y="558.0" width="2.6" height="2.8" fill="#9a8a7a"/><rect x="132" y="558.0" width="2.6" height="2.8" fill="#c08040"/><rect x="137" y="558.0" width="2.6" height="2.8" fill="#a0a0a0"/><rect x="115.8" y="562.5" width="26.5" height="1.4" fill="#c9c5be"/><rect x="117" y="565.5" width="2.6" height="2.8" fill="#b07a40"/><rect x="122" y="565.5" width="2.6" height="2.8" fill="#9a8a7a"/><rect x="127" y="565.5" width="2.6" height="2.8" fill="#c08040"/><rect x="132" y="565.5" width="2.6" height="2.8" fill="#a0a0a0"/><rect x="137" y="565.5" width="2.6" height="2.8" fill="#b86a3a"/><rect x="115.8" y="570.0" width="26.5" height="1.4" fill="#c9c5be"/><rect x="117" y="573.0" width="2.6" height="2.8" fill="#9a8a7a"/><rect x="122" y="573.0" width="2.6" height="2.8" fill="#c08040"/><rect x="127" y="573.0" width="2.6" height="2.8" fill="#a0a0a0"/><rect x="132" y="573.0" width="2.6" height="2.8" fill="#b86a3a"/><rect x="137" y="573.0" width="2.6" height="2.8" fill="#b07a40"/><rect x="115.8" y="577.5" width="26.5" height="1.4" fill="#c9c5be"/><rect x="117" y="580.5" width="2.6" height="2.8" fill="#c08040"/><rect x="122" y="580.5" width="2.6" height="2.8" fill="#a0a0a0"/><rect x="127" y="580.5" width="2.6" height="2.8" fill="#b86a3a"/><rect x="132" y="580.5" width="2.6" height="2.8" fill="#b07a40"/><rect x="137" y="580.5" width="2.6" height="2.8" fill="#9a8a7a"/><rect x="142" y="524" width="6" height="60" fill="#9d9b98"/><polygon points="135,507 248,507 248,584 148,584 148,524 135,524" fill="#111111" /><polygon points="133,507 168,507 160,516 143,528 133,524" fill="#3a3a3a" /><polygon points="150,533 196,507 242,507 152,548" fill="#46372a" /><polygon points="165,527 180,519 184,540 168,545" fill="#8a5a34" /><polygon points="196,509 210,507 212,527 198,532" fill="#9a6436" /><polygon points="150,558 248,517 248,578 150,582" fill="#1d2140" /><polygon points="160,581.6 174,581.04 174,551.92 160,557.8" fill="#283066" /><polygon points="178,580.88 196,580.16 196,542.68 178,550.24" fill="#2d3676" /><polygon points="199,580.04 219,579.24 219,533.02 199,541.42" fill="#323c80" /><polygon points="222,579.12 248,578.08 248,520.84 222,531.76" fill="#354084" /><line x1="176" y1="581.0" x2="176" y2="547.1" stroke="#8c8c94" stroke-width="1.4"/><line x1="197" y1="580.1" x2="197" y2="538.3" stroke="#8c8c94" stroke-width="1.4"/><line x1="220" y1="579.2" x2="220" y2="528.6" stroke="#8c8c94" stroke-width="1.4"/><line x1="247" y1="578.1" x2="247" y2="517.3" stroke="#8c8c94" stroke-width="1.4"/><polygon points="148,548 248,508 248,520 148,560" fill="#0a0a0a" /><polygon points="150,574 248,546 248,551 150,578" fill="#0c0c0c" /><line x1="150" y1="547" x2="248" y2="507" stroke="#7c7c80" stroke-width="1.1"/><rect x="142" y="581" width="106" height="3" fill="#101010"/><rect x="148.0" y="580.0" width="2.4" height="1.6" fill="#e41414"/><rect x="152.2" y="579.5" width="2.4" height="1.7" fill="#e41414"/><rect x="156.4" y="578.9" width="2.4" height="1.7" fill="#e41414"/><rect x="160.6" y="578.4" width="2.4" height="1.8" fill="#e41414"/><rect x="164.8" y="577.8" width="2.4" height="1.8" fill="#e41414"/><rect x="169.0" y="577.2" width="2.4" height="1.9" fill="#e41414"/><rect x="173.2" y="576.7" width="2.4" height="1.9" fill="#e41414"/><rect x="177.4" y="576.1" width="2.4" height="2.0" fill="#e41414"/><rect x="181.6" y="575.6" width="2.4" height="2.0" fill="#e41414"/><rect x="185.8" y="575.0" width="2.4" height="2.1" fill="#e41414"/><rect x="190.0" y="574.5" width="2.4" height="2.1" fill="#e41414"/><rect x="194.2" y="574.0" width="2.4" height="2.2" fill="#e41414"/><rect x="198.4" y="573.4" width="2.4" height="2.2" fill="#e41414"/><rect x="202.6" y="572.9" width="2.4" height="2.2" fill="#e41414"/><rect x="206.8" y="572.3" width="2.4" height="2.3" fill="#e41414"/><rect x="211.0" y="571.8" width="2.4" height="2.4" fill="#e41414"/><rect x="215.2" y="571.2" width="2.4" height="2.4" fill="#e41414"/><rect x="219.4" y="570.6" width="2.4" height="2.5" fill="#e41414"/><rect x="223.6" y="570.1" width="2.4" height="2.5" fill="#e41414"/><rect x="227.8" y="569.5" width="2.4" height="2.6" fill="#e41414"/><rect x="232.0" y="569.0" width="2.4" height="2.6" fill="#e41414"/><rect x="236.2" y="568.5" width="2.4" height="2.7" fill="#e41414"/><rect x="240.4" y="567.9" width="2.4" height="2.7" fill="#e41414"/><rect x="244.6" y="567.4" width="2.4" height="2.8" fill="#e41414"/><polygon points="248,507 300,507 300,583 248,583" fill="#000" /><polygon points="248,566.5 300,561 300,567 248,571" fill="#f01212" /><polygon points="248,583 300,583 300,598 248,594" fill="#c9c7cb" /><polygon points="248,594 300,598 300,642 265,626 248,622" fill="#566d68" /><line x1="248" y1="608" x2="300" y2="618" stroke="#7d918d" stroke-width="0.8"/><polygon points="248,621 265,626 300,642 300,655 295,655 248,635" fill="#000" /><polygon points="248,635 295,654 248,654" fill="#c3c1c5" /></svg></body></html>
